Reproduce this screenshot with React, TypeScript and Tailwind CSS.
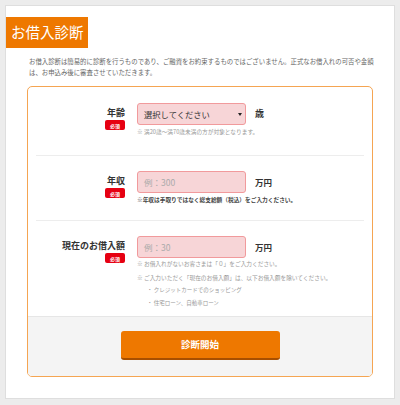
import React from "react";

const font = { fontFamily: '"Noto Sans CJK JP", "Noto Sans", sans-serif' };

function Badge() {
  return (
    <span className="mt-[1px] inline-flex h-[10px] w-[20px] items-center justify-center rounded-[2px] bg-[#e60012] text-[5px] font-bold leading-none text-white">
      必須
    </span>
  );
}

function Label({ text }: { text: string }) {
  return (
    <div className="flex w-[97px] shrink-0 flex-col items-end pt-[4px]">
      <div className="text-[9px] font-bold leading-[12px] text-[#333]">{text}</div>
      <Badge />
    </div>
  );
}

function Field({ placeholder, unit }: { placeholder: string; unit: string }) {
  return (
    <div className="flex items-center">
      <div className="flex h-[22px] w-[109px] items-center rounded-[3px] border border-[#f19a9c] bg-[#f7d5d7] pl-[6px] text-[8.5px] text-[#aaa]">
        {placeholder}
      </div>
      <span className="ml-[9px] text-[8.5px] font-bold text-[#333]">{unit}</span>
    </div>
  );
}

export default function App() {
  return (
    <div className="h-[405px] w-[400px] bg-[#ececec] p-[5px]" style={font}>
      <div className="h-[394px] border border-[#dedede] bg-white">
        <div className="mt-[11px] flex h-[31px] w-[82px] items-center bg-[#ee7800] pl-[5px] text-[14.5px] leading-none text-white">
          お借入診断
        </div>
        <div className="mt-[8px] pl-[23px] text-[6.4px] leading-[11px] text-[#666]">
          お借入診断は簡易的に診断を行うものであり、ご融資をお約束するものではございません。正式なお借入れの可否や金額
          <br />
          は、お申込み後に審査させていただきます。
        </div>
        <div className="ml-[21px] mt-[8px] w-[346px] overflow-hidden rounded-[5px] border border-[#f5a552]">
          {/* Row 1 */}
          <div className="flex gap-[12px] pb-[19px] pt-[16px]">
            <Label text="年齢" />
            <div>
              <div className="flex items-center">
                <div className="flex h-[22px] w-[109px] items-center justify-between rounded-[3px] border border-[#f19a9c] bg-[#f7d5d7] pl-[6px] pr-[3px] text-[8.3px] text-[#333]">
                  <span>選択してください</span>
                  <span className="h-0 w-0 border-x-[2px] border-t-[3px] border-x-transparent border-t-[#222]" />
                </div>
                <span className="ml-[9px] text-[9px] font-bold text-[#333]">歳</span>
              </div>
              <div className="mt-[3px] text-[5.7px] leading-[8px] text-[#999]">
                ※ 満20歳〜満70歳未満の方が対象となります。
              </div>
            </div>
          </div>
          <div className="mx-[8px] h-px bg-[#ededed]" />
          {/* Row 2 */}
          <div className="flex gap-[12px] pb-[16px] pt-[15px]">
            <Label text="年収" />
            <div>
              <Field placeholder="例：300" unit="万円" />
              <div className="mt-[3px] text-[5.7px] font-bold leading-[8px] text-[#444]">
                ※年収は手取りではなく総支給額（税込）をご入力ください。
              </div>
            </div>
          </div>
          <div className="mx-[8px] h-px bg-[#ededed]" />
          {/* Row 3 */}
          <div className="flex gap-[12px] pb-[9px] pt-[15px]">
            <Label text="現在のお借入額" />
            <div>
              <Field placeholder="例：30" unit="万円" />
              <div className="mt-[2px] text-[5.7px] leading-[8px] text-[#999]">
                ※ お借入れがないお客さまは「０」をご入力ください。
              </div>
              <div className="mt-[6px] text-[5.7px] leading-[8px] text-[#999]">
                ※ ご入力いただく「現在のお借入額」は、以下お借入額を除いてください。
              </div>
              <div className="mt-[4px] pl-[10px] text-[5.5px] leading-[8px] text-[#999]">
                ・ クレジットカードでのショッピング
              </div>
              <div className="mt-[5px] pl-[10px] text-[5.5px] leading-[8px] text-[#999]">
                ・ 住宅ローン、自動車ローン
              </div>
            </div>
          </div>
          {/* Footer */}
          <div className="flex justify-center border-t border-[#e6e6e6] bg-[#f4f4f4] pb-[16px] pt-[14px]">
            <button className="flex h-[29px] w-[159px] items-center justify-center rounded-[3px] border-b-[2px] border-[#a84f00] bg-[#ee7800] text-[9.5px] font-bold text-white">
              診断開始
            </button>
          </div>
        </div>
      </div>
    </div>
  );
}
